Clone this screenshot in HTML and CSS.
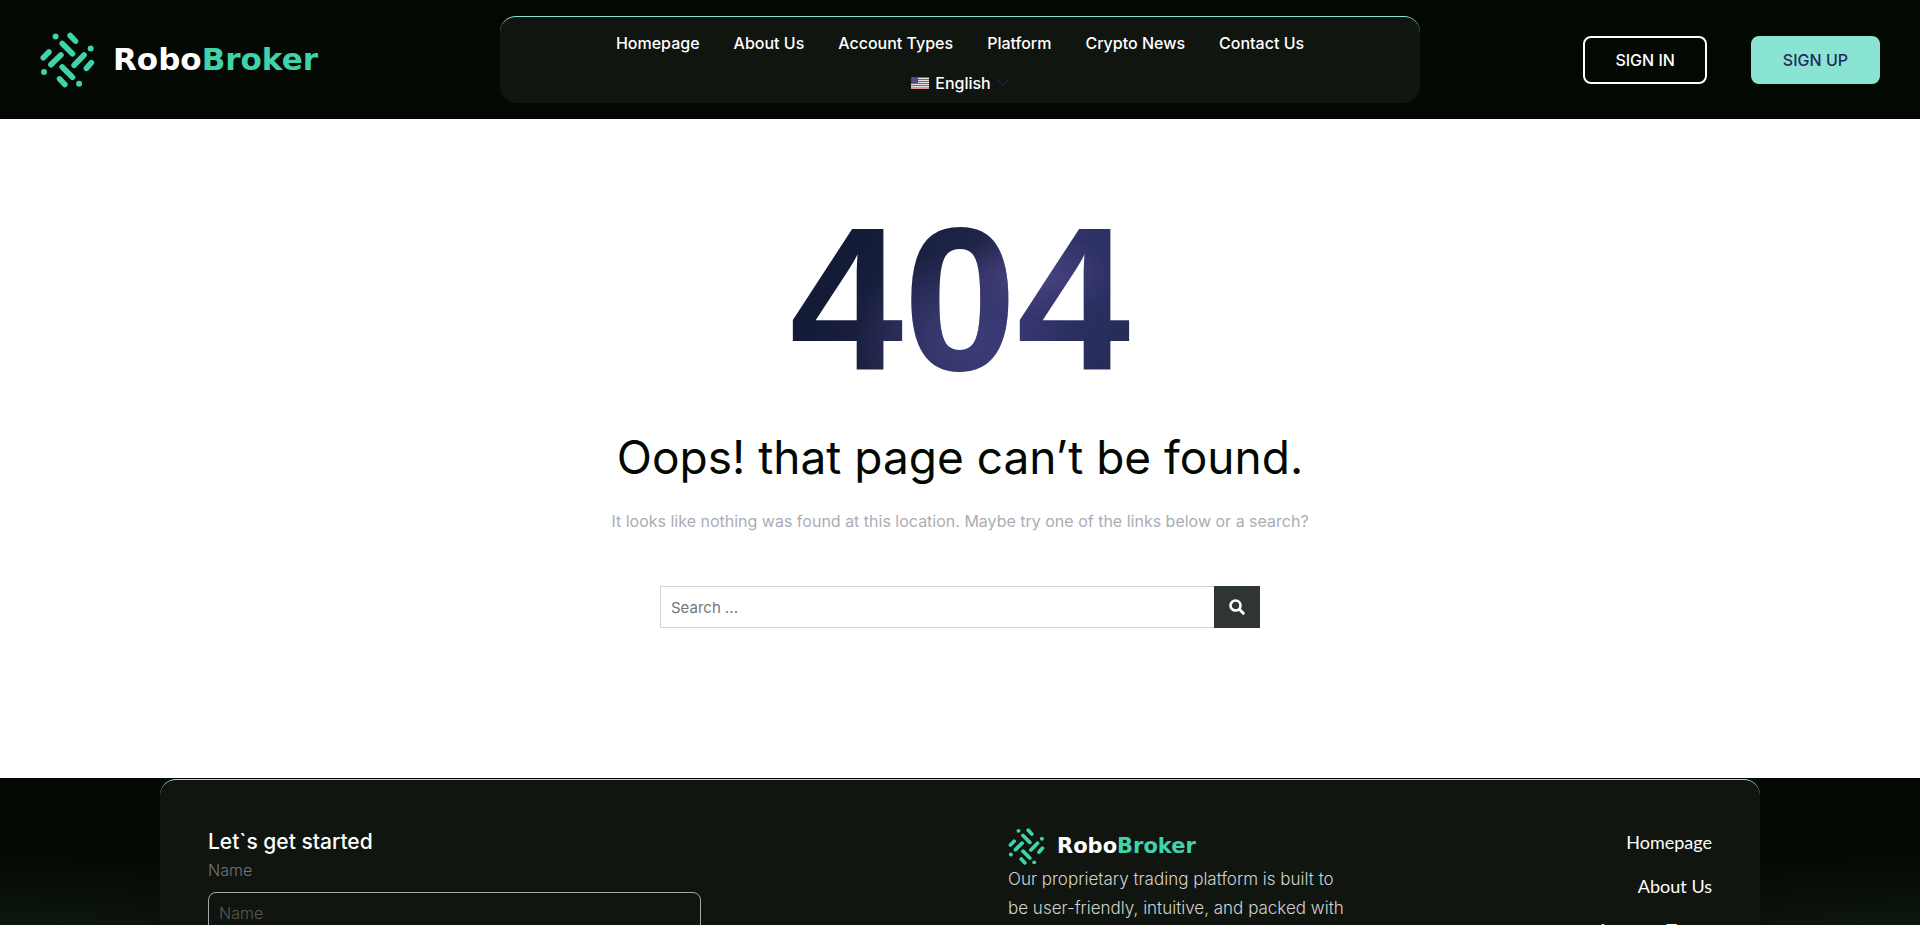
FILE: index.html
```html
<!DOCTYPE html>
<html lang="en">
<head>
    <meta charset="UTF-8">
    <meta name="viewport" content="width=device-width, initial-scale=1.0">
    <title>Page not found - RoboBroker</title>
    <link rel="stylesheet" href="styles.css">
</head>
<body>
    <!-- Logo mark, shared by header and footer -->
    <svg class="sprite" aria-hidden="true">
        <symbol id="logo-mark" viewBox="29 19 166 168">
            <g stroke="#40d3ab" stroke-width="17" stroke-linecap="round">
                <path d="M120 29L136 46M96 53L127 84M39 96L56 79M62 117L92 88M132 119L162 88M169 128L184 111M96 124L127 155M88 160L104 177"/>
            </g>
            <g fill="#40d3ab">
                <circle cx="76" cy="32" r="9"/>
                <circle cx="182" cy="68" r="9"/>
                <circle cx="41" cy="139" r="9"/>
                <circle cx="147" cy="175" r="9"/>
            </g>
        </symbol>
    </svg>

    <header class="header">
        <a href="#" class="logo">
            <svg class="logo-mark" aria-hidden="true"><use href="#logo-mark"/></svg>
            <span class="logo-text">Robo<span class="logo-accent">Broker</span></span>
        </a>

        <nav class="nav">
            <ul class="nav-links">
                <li><a href="#">Homepage</a></li>
                <li><a href="#">About Us</a></li>
                <li><a href="#">Account Types</a></li>
                <li><a href="#">Platform</a></li>
                <li><a href="#">Crypto News</a></li>
                <li><a href="#">Contact Us</a></li>
                <li>
                    <a href="#" class="lang">
                        <svg class="flag" viewBox="0 0 18 12" aria-hidden="true">
                            <rect width="18" height="12" fill="#e8e4e4"/>
                            <path d="M0 .5H18M0 2.5H18M0 4.5H18M0 6.5H18M0 8.5H18M0 11H18" stroke="#dc3b40"/>
                            <rect width="7" height="6" fill="#45457e"/>
                            <path d="M1 1.5H6M2 3H6M1 4.5H6" stroke="#7777a4" stroke-width=".6" stroke-dasharray="1 1"/>
                        </svg>
                        English
                        <svg class="chevron" viewBox="0 0 12 8" aria-hidden="true">
                            <path d="M1 1L6 6L11 1" fill="none" stroke="#25285b"/>
                        </svg>
                    </a>
                </li>
            </ul>
        </nav>

        <div class="header-buttons">
            <a href="#" class="btn btn-outline">SIGN IN</a>
            <a href="#" class="btn btn-fill">SIGN UP</a>
        </div>
    </header>

    <main class="not-found">
        <div class="error-code">404</div>
        <h1>Oops! that page can’t be found.</h1>
        <p>It looks like nothing was found at this location. Maybe try one of the links below or a search?</p>

        <form class="search-form" role="search">
            <input type="search" name="s" placeholder="Search ..." aria-label="Search">
            <button type="submit" aria-label="Search">
                <svg viewBox="0 0 16 16" aria-hidden="true">
                    <circle cx="6.5" cy="6.5" r="5" fill="none" stroke="#fff" stroke-width="2.6"/>
                    <path d="M10.5 10.5L14.3 14.3" stroke="#fff" stroke-width="3" stroke-linecap="round"/>
                </svg>
            </button>
        </form>
    </main>

    <footer class="footer">
        <div class="footer-box">
            <form class="contact-form">
                <h2>Let`s get started</h2>
                <label for="name">Name</label>
                <input type="text" id="name" name="name" placeholder="Name">
            </form>

            <div class="footer-about">
                <a href="#" class="logo logo-small">
                    <svg class="logo-mark" aria-hidden="true"><use href="#logo-mark"/></svg>
                    <span class="logo-text">Robo<span class="logo-accent">Broker</span></span>
                </a>
                <p>Our proprietary trading platform is built to be user-friendly, intuitive, and packed with</p>
            </div>

            <ul class="footer-links">
                <li><a href="#">Homepage</a></li>
                <li><a href="#">About Us</a></li>
                <li><a href="#">Account Types</a></li>
            </ul>
        </div>
    </footer>
</body>
</html>
```
FILE: styles.css
```css
* {
    margin: 0;
    padding: 0;
    box-sizing: border-box;
}

body {
    font-family: Inter, sans-serif;
    font-size: 16px;
    background: #fff;
    color: #030803;
}

a {
    color: inherit;
    text-decoration: none;
}

ul {
    list-style: none;
}

.sprite {
    display: none;
}

/* Header */
.header {
    display: grid;
    grid-template-columns: 1fr 2fr 1fr;
    align-items: center;
    padding: 16px 40px;
    background: #030803;
    color: #fff;
}

.logo {
    display: flex;
    align-items: center;
    gap: 18px;
}

.logo-mark {
    width: 55px;
    height: 56px;
}

.logo-text {
    font-family: "DejaVu Sans", sans-serif;
    font-size: 31px;
    font-weight: bold;
    line-height: 1;
    color: #fff;
}

.logo-accent {
    color: #40d3ab;
}

.nav {
    padding: 6px 80px 0;
    background: #101510;
    border-top: 1px solid #8ae4d3;
    border-radius: 16px;
}

.nav-links {
    display: flex;
    flex-wrap: wrap;
    justify-content: center;
    column-gap: 34px;
    font-size: 16px;
    font-weight: 500;
    line-height: 40px;
}

.lang {
    display: flex;
    align-items: center;
    gap: 6px;
}

.flag {
    width: 18px;
    height: 12px;
}

.chevron {
    width: 12px;
    height: 8px;
}

.header-buttons {
    display: flex;
    justify-content: flex-end;
    gap: 44px;
}

.btn {
    padding: 0 30px;
    border: 2px solid #fff;
    border-radius: 8px;
    font-size: 16px;
    font-weight: 500;
    line-height: 44px;
}

.btn-fill {
    background: #8ae4d3;
    border-color: #8ae4d3;
    color: #25285b;
}

/* 404 */
.not-found {
    display: flex;
    flex-direction: column;
    align-items: center;
    padding: 80px 24px 150px;
    text-align: center;
}

.error-code {
    font-family: "Liberation Sans", Arial, sans-serif;
    font-size: 204px;
    font-weight: 700;
    line-height: 200px;
    color: transparent;
    background:
        radial-gradient(ellipse at 72% 38%, rgba(84, 76, 140, 0.7), transparent 25%),
        radial-gradient(ellipse at 50% 68%, rgba(70, 66, 130, 0.8), transparent 45%),
        linear-gradient(120deg, #141b36 20%, #1e2447 45%, #30336a 65%, #232a52);
    background-clip: text;
    -webkit-background-clip: text;
}

.not-found h1 {
    margin-top: 28px;
    font-size: 46px;
    font-weight: 400;
    line-height: 60px;
}

.not-found p {
    margin-top: 20px;
    color: #acacb3;
    line-height: 28px;
}

.search-form {
    display: flex;
    width: 100%;
    max-width: 600px;
    margin-top: 51px;
}

.search-form input {
    flex: 1;
    height: 42px;
    padding: 0 10px;
    border: 1px solid #d5d5d8;
    border-right: none;
    font: inherit;
    font-size: 15px;
}

.search-form input::placeholder {
    color: #757579;
}

.search-form button {
    display: flex;
    align-items: center;
    justify-content: center;
    width: 46px;
    border: none;
    background: #2f3631;
    cursor: pointer;
}

.search-form svg {
    width: 16px;
    height: 16px;
}

/* Footer */
.footer {
    padding: 1px 160px 0;
    background:
        radial-gradient(ellipse 500px 110px at 0% 180px, #121c15, transparent),
        radial-gradient(ellipse 500px 110px at 100% 180px, #121c15, transparent),
        #030803;
    color: #fff;
}

.footer-box {
    display: grid;
    grid-template-columns: 800px 344px 1fr;
    padding: 48px;
    background: #101510;
    border-top: 1px solid #8ae4d3;
    border-radius: 16px;
}

.contact-form {
    max-width: 493px;
}

.contact-form h2 {
    font-size: 21px;
    font-weight: 500;
    line-height: 28px;
}

.contact-form label {
    display: block;
    color: #75757c;
    font-weight: 300;
    line-height: 28px;
}

.contact-form input {
    width: 100%;
    height: 42px;
    margin-top: 8px;
    padding: 0 10px;
    background: transparent;
    border: 1px solid #a5a8a5;
    border-radius: 8px;
    color: #fff;
    font: inherit;
    font-weight: 300;
}

.contact-form input::placeholder {
    color: #555a56;
}

.logo-small {
    gap: 12px;
}

.logo-small .logo-mark {
    width: 37px;
    height: 37px;
}

.logo-small .logo-text {
    font-size: 21px;
}

.footer-about p {
    color: #d0d2d0;
    font-size: 17px;
    font-weight: 300;
    line-height: 29px;
}

.footer-links {
    text-align: right;
    font-family: Lato, sans-serif;
    font-size: 18px;
    line-height: 28px;
}

.footer-links li {
    margin-bottom: 16px;
}
```
